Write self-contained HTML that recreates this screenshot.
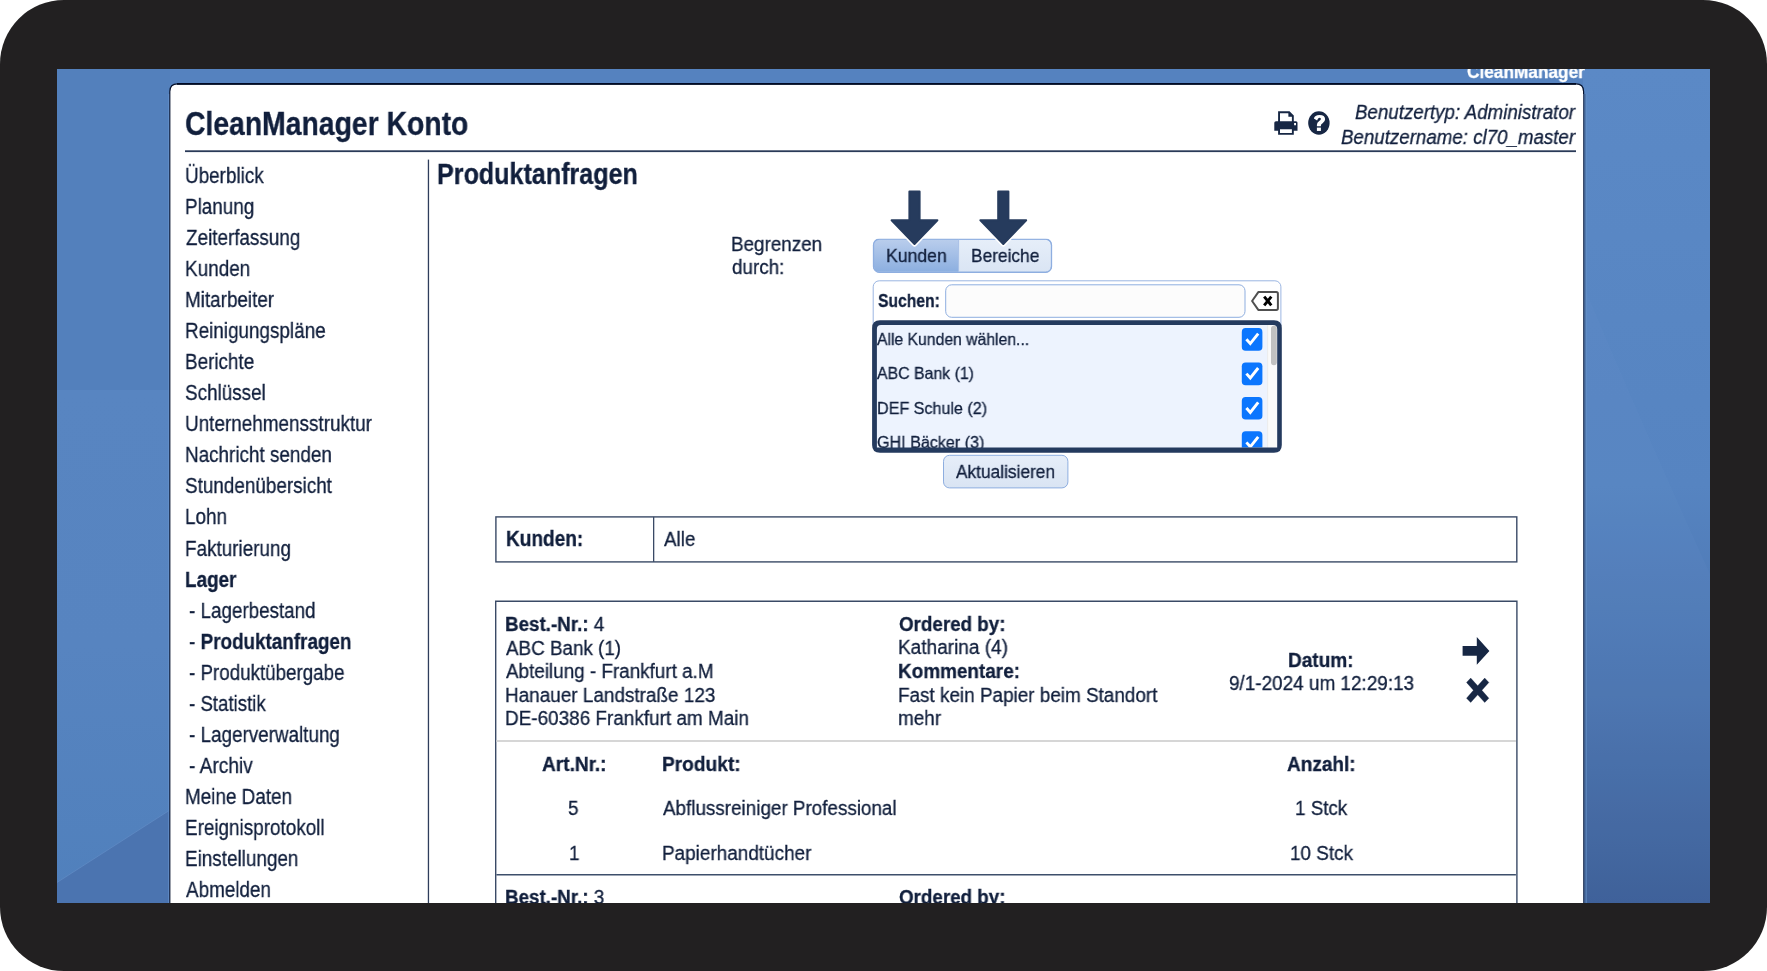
<!DOCTYPE html>
<html><head><meta charset="utf-8">
<style>
*{margin:0;padding:0;box-sizing:border-box}
html,body{width:1767px;height:971px;overflow:hidden;background:#fff}
body{font-family:"Liberation Sans",sans-serif;color:#172744;position:relative}
#frame{position:absolute;left:0;top:0;width:1767px;height:971px;background:#222021;border-radius:64px}
#screen{position:absolute;left:57px;top:69px;width:1653px;height:834px;overflow:hidden;background:#5380bd}
#inner{position:absolute;left:-57px;top:-69px;width:1767px;height:971px}
.t{position:absolute;white-space:nowrap;transform-origin:0 0;color:#111f3c;will-change:transform;-webkit-text-stroke:0.3px currentColor}
svg{position:absolute;left:0;top:0}
</style></head><body>
<div id="frame"></div>
<div id="screen"><div id="inner">
<svg width="1767" height="971" viewBox="0 0 1767 971">
 <defs>
  <linearGradient id="bgL" x1="0" y1="0" x2="0" y2="1">
   <stop offset="0" stop-color="#5582bf"/>
   <stop offset="0.35" stop-color="#5380bc"/>
   <stop offset="0.38" stop-color="#5886c2"/>
   <stop offset="0.75" stop-color="#5281bd"/>
   <stop offset="1" stop-color="#4670ab"/>
  </linearGradient>
  <linearGradient id="bgR" x1="0" y1="0" x2="0" y2="1">
   <stop offset="0" stop-color="#5b89c6"/>
   <stop offset="0.5" stop-color="#5684c1"/>
   <stop offset="0.75" stop-color="#4a73ae"/>
   <stop offset="1" stop-color="#3a5b93"/>
  </linearGradient>
  <linearGradient id="btnK" x1="0" y1="0" x2="0" y2="1">
   <stop offset="0" stop-color="#b9cdec"/>
   <stop offset="1" stop-color="#8cafe0"/>
  </linearGradient>
  <linearGradient id="btnB" x1="0" y1="0" x2="0" y2="1">
   <stop offset="0" stop-color="#e6eef9"/>
   <stop offset="1" stop-color="#dae5f4"/>
  </linearGradient>
  <linearGradient id="btnA" x1="0" y1="0" x2="0" y2="1">
   <stop offset="0" stop-color="#e6eef9"/>
   <stop offset="1" stop-color="#d9e4f3"/>
  </linearGradient>
  <linearGradient id="bgL2" x1="0" y1="0" x2="0" y2="1">
   <stop offset="0" stop-color="#5885c1"/>
   <stop offset="0.5" stop-color="#5784c0"/>
   <stop offset="1" stop-color="#5080bc"/>
  </linearGradient>
  <clipPath id="listClip"><rect x="874" y="322" width="405" height="125.6"/></clipPath>
  <clipPath id="kbClip"><rect x="873.5" y="239.2" width="85" height="33" /></clipPath>
 </defs>
 <!-- wallpaper -->
 <rect x="57" y="68" width="1653" height="835" fill="#5582be"/>
 <rect x="57" y="68" width="113" height="322" fill="#5380bc"/>
 <rect x="57" y="390" width="113" height="513" fill="url(#bgL2)"/>
 <path d="M57 903 V882.5 L170 810 V903 Z" fill="#4b74b0"/>
 <path d="M57 882.5 L170 810" stroke="#6a93cb" stroke-width="1" opacity="0.5"/>
 <rect x="1583" y="68" width="127" height="835" fill="url(#bgR)"/>
 <path d="M1583 284 Q1640 420 1710 574 V903 H1583 Z" fill="#6a95cf" opacity="0.12"/>
 <rect x="170" y="68" width="1413" height="15" fill="#5582bf"/>
 <!-- panel -->
 <path d="M169.8 910 V91.5 Q169.8 83.8 177.5 83.8 H1575.9 Q1583.6 83.8 1583.6 91.5 V910" fill="#ffffff" stroke="#06122e" stroke-width="1.2"/>
 <rect x="1583.2" y="94" width="1.3" height="816" fill="#475a7a"/>
 <rect x="1584.5" y="94" width="1.1" height="816" fill="#3d5e90"/>
 <rect x="1585.6" y="94" width="1.2" height="816" fill="#6892c6" opacity="0.7"/>
 <rect x="168" y="94" width="1.2" height="816" fill="#6592cd" opacity="0.6"/>
 <rect x="177" y="83" width="1399" height="1.8" fill="#000a24"/>
 <!-- header rule & vertical line -->
 <rect x="185" y="150.3" width="391" height="1.8" fill="#2a3a58"/>
 <rect x="576" y="150.3" width="1000" height="1.8" fill="#2a3a58"/>
 <rect x="427.8" y="159.6" width="1.3" height="750" fill="#2e3d5c"/>
 <!-- print icon -->
 <g fill="#172744">
  <path d="M1278.1 111.3 H1289.5 L1293.8 115.6 V123 H1291.9 V116.6 L1288.6 113.2 H1280 V123 H1278.1 Z"/>
  <path d="M1288.4 112 V116.8 H1293 Z"/>
  <path d="M1276 121.2 H1296 Q1297.5 121.2 1297.5 122.7 V130.8 H1293.8 V134.7 H1278.1 V130.8 H1274.3 V122.7 Q1274.3 121.2 1276 121.2 Z M1280 129.2 V133.1 H1291.9 V129.2 Z M1294.1 123.1 V125.3 H1296 V123.1 Z" fill-rule="evenodd"/>
 </g>
 <!-- help icon -->
 <ellipse cx="1318.9" cy="123" rx="10.7" ry="11.7" fill="#172744"/>
 <path d="M1313.9 118.6 Q1314.6 114.9 1319.5 114.9 Q1325.1 114.9 1325.1 119.2 Q1325.1 121.6 1322.6 123.2 Q1320.9 124.3 1320.9 125.5 V126.2 H1316.9 V124.8 Q1316.9 122.4 1319.2 120.9 Q1320.9 119.9 1320.9 119 Q1320.9 117.8 1319.4 117.8 Q1317.9 117.8 1317.1 120.4 Z" fill="#fff"/>
 <rect x="1316.9" y="127.6" width="4" height="3.35" fill="#fff"/>

 <!-- Kunden/Bereiche button group -->
 <rect x="873.5" y="239.2" width="178" height="33" rx="6" fill="url(#btnB)" stroke="#8eaee0" stroke-width="1"/>
 <path d="M879.5 239.7 H958.6 V271.7 H879.5 Q874 271.7 874 266.2 V245.2 Q874 239.7 879.5 239.7 Z" fill="url(#btnK)"/>
 <rect x="873.5" y="239.0" width="178" height="33.4" rx="6" fill="none" stroke="#8eaee0" stroke-width="1.3"/>
 <rect x="958.1" y="239.7" width="1" height="32" fill="#a9c0e6"/>

 <!-- search box -->
 <rect x="873.2" y="280.8" width="407.7" height="50" rx="6" fill="#fff" stroke="#9bb6e2" stroke-width="1"/>
 <rect x="945.7" y="284.8" width="299.3" height="32.5" rx="6" fill="#fcfcfc" stroke="#8eaee0" stroke-width="1"/>
 <!-- clear icon -->
 <path d="M1252.1 301 L1258.3 292.1 H1276.3 Q1277.9 292.1 1277.9 293.7 V308.3 Q1277.9 309.9 1276.3 309.9 H1258.3 Z" fill="#fff" stroke="#505050" stroke-width="2" stroke-linejoin="round"/>
 <path d="M1264.2 296.6 L1271.3 305.3 M1271.3 296.6 L1264.2 305.3" stroke="#000" stroke-width="2.9" stroke-linecap="butt"/>

 <!-- list box background -->
 <rect x="874.5" y="322.5" width="405" height="128" rx="6" fill="#edf3fe"/>
 <!-- scrollbar -->
 <rect x="1267.3" y="325" width="10" height="123" fill="#fafafa"/>
 <rect x="1267.3" y="325" width="0.8" height="123" fill="#e8e8e8"/>
 <rect x="1271" y="325.7" width="5.8" height="39.5" rx="2.9" fill="#c1c1c1"/>
 <!-- checkboxes -->
 <g id="cbs" clip-path="url(#listClip)">
  <rect x="1241.8" y="328.1" width="20.6" height="22.7" rx="3.8" fill="#0b76fe"/>
  <rect x="1241.8" y="362.5" width="20.6" height="22.7" rx="3.8" fill="#0b76fe"/>
  <rect x="1241.8" y="396.9" width="20.6" height="22.7" rx="3.8" fill="#0b76fe"/>
  <rect x="1241.8" y="431.3" width="20.6" height="22.7" rx="3.8" fill="#0b76fe"/>
 </g>
 <g fill="none" stroke="#fff" stroke-width="2.9" stroke-linecap="butt" stroke-linejoin="miter" clip-path="url(#listClip)">
  <path d="M1246.4 339.2 L1250.3 343.6 L1258.2 333.6"/>
  <path d="M1246.4 373.6 L1250.3 378.0 L1258.2 368.0"/>
  <path d="M1246.4 408.0 L1250.3 412.4 L1258.2 402.4"/>
  <path d="M1246.4 442.4 L1250.3 446.8 L1258.2 436.8"/>
 </g>

 <!-- Aktualisieren button -->
 <rect x="943.5" y="455.3" width="124.4" height="32.6" rx="6" fill="url(#btnA)" stroke="#8eaee0" stroke-width="1"/>

 <!-- Kunden table -->
 <rect x="495.9" y="516.9" width="1020.9" height="45" fill="none" stroke="#3a4a66" stroke-width="1.4"/>
 <rect x="653" y="516.9" width="1.3" height="45" fill="#3a4a66"/>

 <!-- order box -->
 <path d="M495.7 910 V601.2 H1516.9 V910" fill="none" stroke="#3a4a66" stroke-width="1.4"/>
 <rect x="496.4" y="740" width="1019.5" height="2" fill="#d6d6d6"/>
 <rect x="496.4" y="874" width="1019.5" height="1.5" fill="#3d4f6b"/>
 <!-- right arrow icon -->
 <path d="M1462.6 646.1 H1476.8 V637 L1489.4 651 L1476.8 664.8 V655.7 H1462.6 Z" fill="#172744"/>
 <!-- X icon -->
 <path d="M1466.5 682.4 L1470.7 678.1 L1477.7 685.7 L1484.7 678.1 L1488.9 682.4 L1481.9 690.3 L1488.9 698.2 L1484.7 702.5 L1477.7 694.8 L1470.7 702.5 L1466.5 698.2 L1473.4 690.3 Z" fill="#172744" stroke="#172744" stroke-width="0.3" stroke-linejoin="round"/>
</svg>
<div class="t" style="left:1466.51px;top:62.12px;font-size:19px;line-height:19px;font-weight:bold;color:#ffffff;transform:scaleX(0.9072)">CleanManager</div>
<div class="t" style="left:185.26px;top:107.37px;font-size:33px;line-height:33px;font-weight:bold;transform:scaleX(0.8586)">CleanManager Konto</div>
<div class="t" style="left:1355.49px;top:102.37px;font-size:20px;line-height:20px;font-style:italic;transform:scaleX(0.9366)">Benutzertyp: Administrator</div>
<div class="t" style="left:1341.49px;top:127.37px;font-size:20px;line-height:20px;font-style:italic;transform:scaleX(0.9359)">Benutzername: cl70_master</div>
<div class="t" style="left:184.93px;top:164.68px;font-size:22px;line-height:22px;transform:scaleX(0.8580)">Überblick</div>
<div class="t" style="left:184.92px;top:195.75px;font-size:22px;line-height:22px;transform:scaleX(0.8580)">Planung</div>
<div class="t" style="left:185.74px;top:226.82px;font-size:22px;line-height:22px;transform:scaleX(0.8580)">Zeiterfassung</div>
<div class="t" style="left:184.92px;top:257.89px;font-size:22px;line-height:22px;transform:scaleX(0.8594)">Kunden</div>
<div class="t" style="left:184.92px;top:288.96px;font-size:22px;line-height:22px;transform:scaleX(0.8580)">Mitarbeiter</div>
<div class="t" style="left:184.92px;top:320.03px;font-size:22px;line-height:22px;transform:scaleX(0.8580)">Reinigungspläne</div>
<div class="t" style="left:184.92px;top:351.10px;font-size:22px;line-height:22px;transform:scaleX(0.8580)">Berichte</div>
<div class="t" style="left:184.94px;top:382.17px;font-size:22px;line-height:22px;transform:scaleX(0.8580)">Schlüssel</div>
<div class="t" style="left:184.93px;top:413.24px;font-size:22px;line-height:22px;transform:scaleX(0.8594)">Unternehmensstruktur</div>
<div class="t" style="left:184.92px;top:444.31px;font-size:22px;line-height:22px;transform:scaleX(0.8580)">Nachricht senden</div>
<div class="t" style="left:184.94px;top:475.38px;font-size:22px;line-height:22px;transform:scaleX(0.8580)">Stundenübersicht</div>
<div class="t" style="left:184.92px;top:506.45px;font-size:22px;line-height:22px;transform:scaleX(0.8580)">Lohn</div>
<div class="t" style="left:184.92px;top:537.52px;font-size:22px;line-height:22px;transform:scaleX(0.8580)">Fakturierung</div>
<div class="t" style="left:185.03px;top:568.59px;font-size:22px;line-height:22px;font-weight:bold;transform:scaleX(0.8591)">Lager</div>
<div class="t" style="left:189.49px;top:599.66px;font-size:22px;line-height:22px;transform:scaleX(0.8550)">- Lagerbestand</div>
<div class="t" style="left:189.48px;top:630.73px;font-size:22px;line-height:22px;transform:scaleX(0.8575)">- <b>Produktanfragen</b></div>
<div class="t" style="left:189.49px;top:661.80px;font-size:22px;line-height:22px;transform:scaleX(0.8531)">- Produktübergabe</div>
<div class="t" style="left:189.49px;top:692.87px;font-size:22px;line-height:22px;transform:scaleX(0.8479)">- Statistik</div>
<div class="t" style="left:189.48px;top:723.94px;font-size:22px;line-height:22px;transform:scaleX(0.8567)">- Lagerverwaltung</div>
<div class="t" style="left:189.47px;top:755.01px;font-size:22px;line-height:22px;transform:scaleX(0.8694)">- Archiv</div>
<div class="t" style="left:184.92px;top:786.08px;font-size:22px;line-height:22px;transform:scaleX(0.8580)">Meine Daten</div>
<div class="t" style="left:184.92px;top:817.15px;font-size:22px;line-height:22px;transform:scaleX(0.8580)">Ereignisprotokoll</div>
<div class="t" style="left:184.92px;top:848.22px;font-size:22px;line-height:22px;transform:scaleX(0.8580)">Einstellungen</div>
<div class="t" style="left:185.81px;top:879.29px;font-size:22px;line-height:22px;transform:scaleX(0.8580)">Abmelden</div>
<div class="t" style="left:437.17px;top:160.15px;font-size:29px;line-height:29px;font-weight:bold;transform:scaleX(0.8656)">Produktanfragen</div>
<div class="t" style="left:731.33px;top:234.59px;font-size:19.5px;line-height:19.5px;transform:scaleX(0.9654)">Begrenzen</div>
<div class="t" style="left:732.18px;top:257.69px;font-size:19.5px;line-height:19.5px;transform:scaleX(0.9654)">durch:</div>
<div class="t" style="left:886.00px;top:246.02px;font-size:19px;line-height:19px;transform:scaleX(0.9275)">Kunden</div>
<div class="t" style="left:971.22px;top:246.02px;font-size:19px;line-height:19px;transform:scaleX(0.9114)">Bereiche</div>
<div class="t" style="left:877.51px;top:292.06px;font-size:18px;line-height:18px;font-weight:bold;transform:scaleX(0.8709)">Suchen:</div>
<div class="t" style="left:877.28px;top:330.93px;font-size:16.5px;line-height:16.5px;transform:scaleX(0.9533)">Alle Kunden wählen...</div>
<div class="t" style="left:877.28px;top:365.33px;font-size:16.5px;line-height:16.5px;transform:scaleX(0.9615)">ABC Bank (1)</div>
<div class="t" style="left:876.76px;top:399.73px;font-size:16.5px;line-height:16.5px;transform:scaleX(0.9766)">DEF Schule (2)</div>
<div class="t" style="left:877.47px;top:434.13px;font-size:16.5px;line-height:16.5px;transform:scaleX(0.9766)">GHI Bäcker (3)</div>
<div class="t" style="left:956.08px;top:462.94px;font-size:18.5px;line-height:18.5px;transform:scaleX(0.9343)">Aktualisieren</div>
<div class="t" style="left:506.10px;top:529.10px;font-size:21.5px;line-height:21.5px;font-weight:bold;transform:scaleX(0.8852)">Kunden:</div>
<div class="t" style="left:664.38px;top:529.47px;font-size:20px;line-height:20px;transform:scaleX(0.9411)">Alle</div>
<div class="t" style="left:505.48px;top:614.17px;font-size:20px;line-height:20px;transform:scaleX(0.9397)"><b>Best.-Nr.:</b> 4</div>
<div class="t" style="left:505.68px;top:637.87px;font-size:20px;line-height:20px;transform:scaleX(0.9414)">ABC Bank (1)</div>
<div class="t" style="left:505.68px;top:661.37px;font-size:20px;line-height:20px;transform:scaleX(0.9429)">Abteilung - Frankfurt a.M</div>
<div class="t" style="left:504.74px;top:684.77px;font-size:20px;line-height:20px;transform:scaleX(0.9460)">Hanauer Landstraße 123</div>
<div class="t" style="left:504.74px;top:708.47px;font-size:20px;line-height:20px;transform:scaleX(0.9461)">DE-60386 Frankfurt am Main</div>
<div class="t" style="left:898.99px;top:613.87px;font-size:20px;line-height:20px;font-weight:bold;transform:scaleX(0.9394)">Ordered by:</div>
<div class="t" style="left:898.14px;top:637.47px;font-size:20px;line-height:20px;transform:scaleX(0.9513)">Katharina (4)</div>
<div class="t" style="left:898.27px;top:661.37px;font-size:20px;line-height:20px;font-weight:bold;transform:scaleX(0.9463)">Kommentare:</div>
<div class="t" style="left:898.15px;top:684.77px;font-size:20px;line-height:20px;transform:scaleX(0.9449)">Fast kein Papier beim Standort</div>
<div class="t" style="left:898.26px;top:708.47px;font-size:20px;line-height:20px;transform:scaleX(0.9440)">mehr</div>
<div class="t" style="left:1288.27px;top:649.67px;font-size:20px;line-height:20px;font-weight:bold;transform:scaleX(0.9504)">Datum:</div>
<div class="t" style="left:1228.97px;top:673.37px;font-size:20px;line-height:20px;transform:scaleX(0.9458)">9/1-2024 um 12:29:13</div>
<div class="t" style="left:542.10px;top:754.37px;font-size:20px;line-height:20px;font-weight:bold;transform:scaleX(0.9529)">Art.Nr.:</div>
<div class="t" style="left:662.16px;top:754.37px;font-size:20px;line-height:20px;font-weight:bold;transform:scaleX(0.9563)">Produkt:</div>
<div class="t" style="left:1287.10px;top:754.27px;font-size:20px;line-height:20px;font-weight:bold;transform:scaleX(0.9495)">Anzahl:</div>
<div class="t" style="left:568.45px;top:798.37px;font-size:20px;line-height:20px;transform:scaleX(0.9400)">5</div>
<div class="t" style="left:662.98px;top:798.37px;font-size:20px;line-height:20px;transform:scaleX(0.9422)">Abflussreiniger Professional</div>
<div class="t" style="left:1295.03px;top:798.47px;font-size:20px;line-height:20px;transform:scaleX(0.9403)">1 Stck</div>
<div class="t" style="left:568.93px;top:842.77px;font-size:20px;line-height:20px;transform:scaleX(0.9400)">1</div>
<div class="t" style="left:662.04px;top:842.77px;font-size:20px;line-height:20px;transform:scaleX(0.9464)">Papierhandtücher</div>
<div class="t" style="left:1290.02px;top:842.57px;font-size:20px;line-height:20px;transform:scaleX(0.9436)">10 Stck</div>
<div class="t" style="left:505.28px;top:886.97px;font-size:20px;line-height:20px;transform:scaleX(0.9397)"><b>Best.-Nr.:</b> 3</div>
<div class="t" style="left:898.99px;top:886.97px;font-size:20px;line-height:20px;font-weight:bold;transform:scaleX(0.9394)">Ordered by:</div>
<svg width="1767" height="971" viewBox="0 0 1767 971">
 <!-- list box border over texts -->
 <path fill-rule="evenodd" fill="#243a5e" d="M880 320.2 H1274 Q1281.8 320.2 1281.8 328 V445 Q1281.8 452.8 1274 452.8 H880 Q872.1 452.8 872.1 445 V328 Q872.1 320.2 880 320.2 Z M881 324.9 H1273 Q1277.2 324.9 1277.2 329 V447.6 H876.9 V329 Q876.9 324.9 881 324.9 Z"/>
 <!-- arrows -->
 <g stroke-linejoin="round">
  <path d="M909.4 191.6 H919.6 V220.2 H937.4 L914.5 244.0 L891.6 220.2 H909.4 Z" fill="#fff" stroke="#fff" stroke-width="5.2"/>
  <path d="M998.2 191.6 H1008.4 V220.2 H1026.2 L1003.3 244.0 L980.4 220.2 H998.2 Z" fill="#fff" stroke="#fff" stroke-width="5.2"/>
 </g>
 <rect x="873" y="182" width="180" height="56.7" fill="#fff"/>
 <g fill="#263b5d" stroke="#263b5d" stroke-width="2" stroke-linejoin="round">
  <path d="M909.4 191.6 H919.6 V220.2 H937.4 L914.5 244.0 L891.6 220.2 H909.4 Z"/>
  <path d="M998.2 191.6 H1008.4 V220.2 H1026.2 L1003.3 244.0 L980.4 220.2 H998.2 Z"/>
 </g>
</svg>
</div></div>
</body></html>
